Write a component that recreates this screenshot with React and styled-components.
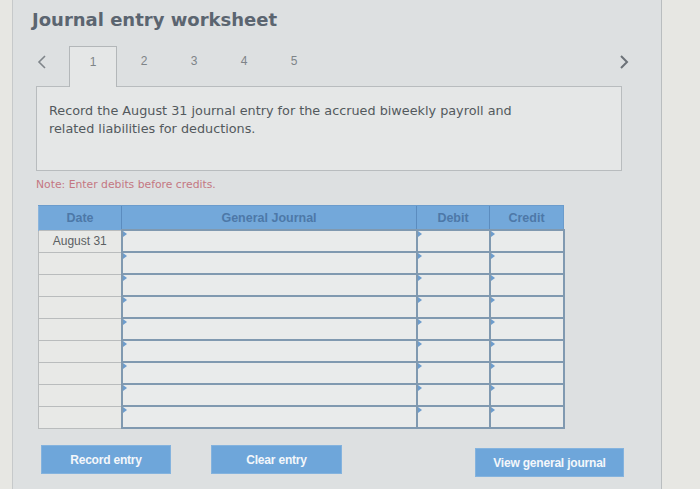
import React from "react";
import styled, { createGlobalStyle } from "styled-components";

const Global = createGlobalStyle`
  html, body { margin: 0; padding: 0; }
  body { background: #e7e7e3; width: 700px; height: 489px; overflow: hidden; }
`;

const Panel = styled.div`
  margin-left: 12px;
  width: 650px;
  height: 489px;
  box-sizing: border-box;
  background: #dde0e1;
  border-left: 1px solid #c6c9ca;
  border-right: 1px solid #b9bdbf;
  padding: 0 0 0 23px;
  font-family: "Liberation Sans", Arial, sans-serif;
`;

const Title = styled.h1`
  margin: 0 0 0 -4px;
  padding-top: 9px;
  height: 46px;
  box-sizing: border-box;
  font-family: "DejaVu Sans", Verdana, sans-serif;
  font-weight: bold;
  font-size: 18px;
  color: #5b6570;
`;

const TabBar = styled.div`
  display: flex;
  align-items: stretch;
  height: 40px;
  width: 604px;
`;

const Arrow = styled.div`
  width: 33px;
  display: flex;
  align-items: center;
  justify-content: ${(p) => (p.$right ? "center" : "flex-start")};
  padding-bottom: 8px;
  box-sizing: border-box;
  margin-left: ${(p) => (p.$right ? "auto" : "0")};
`;

const Tab = styled.div`
  width: ${(p) => (p.$active ? "48px" : "50px")};
  margin-right: ${(p) => (p.$active ? "2px" : "0")};
  box-sizing: border-box;
  display: flex;
  align-items: center;
  justify-content: center;
  padding-bottom: 10px;
  font-size: 12px;
  color: #7e8488;
  position: relative;
  z-index: 1;
  ${(p) =>
    p.$active &&
    `
    background: #e5e7e7;
    border: 1px solid #b3b7b9;
    border-bottom: none;
    height: 41px;
  `}
`;

const Question = styled.div`
  width: 586px;
  height: 85px;
  box-sizing: border-box;
  background: #e5e7e7;
  border: 1px solid #b8bcbe;
  padding: 15px 12px 0;
  font-family: "DejaVu Sans", Verdana, sans-serif;
  font-size: 12.8px;
  line-height: 18px;
  color: #53595d;
`;

const Note = styled.div`
  margin-top: 7px;
  font-family: "DejaVu Sans", Verdana, sans-serif;
  font-size: 10.8px;
  color: #c47782;
  height: 15px;
`;

const Table = styled.table`
  margin: 12px 0 0 2px;
  border-collapse: collapse;
  table-layout: fixed;
  width: 525px;
`;

const Th = styled.th`
  height: 23px;
  background: #73a8da;
  color: #4d78a8;
  font-size: 12.5px;
  font-weight: bold;
  border-left: 1px solid #5b8cbf;
  border-top: 1px solid #6b9ccc;
  padding: 0;
  &:first-child { border-left: 1px solid #8ab4dc; }
  &:last-child { border-right: 1px solid #6b9ccc; }
`;

const DateCell = styled.td`
  height: 20px;
  padding: 0;
  background: #e8e9e7;
  border: 1px solid #b9bcbd;
  text-align: center;
  font-size: 12px;
  color: #5b5f62;
`;

const InputCell = styled.td`
  height: 20px;
  padding: 0;
  background: #e9ebeb;
  border: 2px solid #8099b0;
  position: relative;
`;

const Marker = styled.span`
  position: absolute;
  left: 0;
  top: 0;
  width: 0;
  height: 0;
  border-top: 3px solid transparent;
  border-bottom: 3px solid transparent;
  border-left: 4px solid #6d9ccc;
`;

const Buttons = styled.div`
  display: flex;
  align-items: flex-start;
  width: 583px;
  margin: 16px 0 0 5px;
`;

const Button = styled.button`
  width: ${(p) => p.$w}px;
  height: 29px;
  margin-right: ${(p) => p.$mr || 0}px;
  margin-left: ${(p) => (p.$push ? "auto" : "0")};
  margin-top: ${(p) => p.$mt || 0}px;
  background: #6ea6da;
  border: 1px solid #84b3de;
  color: #f4f7fa;
  font-family: "Liberation Sans", Arial, sans-serif;
  font-weight: bold;
  font-size: 12px;
  letter-spacing: -0.2px;
  padding: 0;
`;

const ChevronLeft = () => (
  <svg width="12" height="16" viewBox="0 0 12 16">
    <path d="M9 2 L3 8 L9 14" fill="none" stroke="#7f858a" strokeWidth="1.6" />
  </svg>
);
const ChevronRight = () => (
  <svg width="12" height="16" viewBox="0 0 12 16">
    <path d="M3 2 L9 8 L3 14" fill="none" stroke="#6c7278" strokeWidth="2" />
  </svg>
);

const rows = Array.from({ length: 9 }, (_, i) => i);

export default function App() {
  return (
    <>
      <Global />
      <Panel>
        <Title>Journal entry worksheet</Title>
        <TabBar>
          <Arrow>
            <ChevronLeft />
          </Arrow>
          {[1, 2, 3, 4, 5].map((n) => (
            <Tab key={n} $active={n === 1}>
              {n}
            </Tab>
          ))}
          <Arrow $right>
            <ChevronRight />
          </Arrow>
        </TabBar>
        <Question>
          Record the August 31 journal entry for the accrued biweekly payroll and
          <br />
          related liabilities for deductions.
        </Question>
        <Note>Note: Enter debits before credits.</Note>
        <Table>
          <colgroup>
            <col style={{ width: 83 }} />
            <col style={{ width: 295 }} />
            <col style={{ width: 73 }} />
            <col style={{ width: 74 }} />
          </colgroup>
          <thead>
            <tr>
              <Th>Date</Th>
              <Th>General Journal</Th>
              <Th>Debit</Th>
              <Th>Credit</Th>
            </tr>
          </thead>
          <tbody>
            {rows.map((i) => (
              <tr key={i}>
                <DateCell>{i === 0 ? "August 31" : ""}</DateCell>
                <InputCell>
                  <Marker />
                </InputCell>
                <InputCell>
                  <Marker />
                </InputCell>
                <InputCell>
                  <Marker />
                </InputCell>
              </tr>
            ))}
          </tbody>
        </Table>
        <Buttons>
          <Button $w={130} $mr={40}>Record entry</Button>
          <Button $w={131}>Clear entry</Button>
          <Button $w={149} $push $mt={3}>View general journal</Button>
        </Buttons>
      </Panel>
    </>
  );
}
